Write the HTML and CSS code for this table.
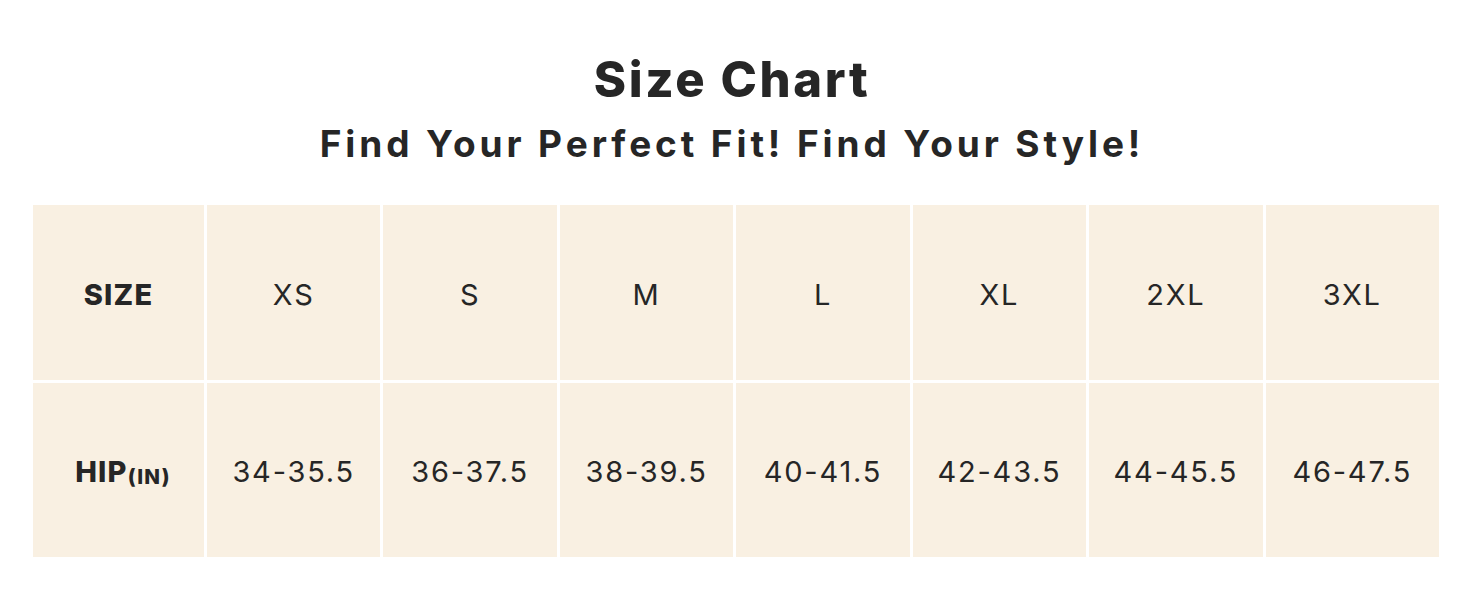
FILE: index.html
```html
<!DOCTYPE html>
<html lang="en">
<head>
<meta charset="utf-8">
<title>Size Chart</title>
<link rel="stylesheet" href="styles.css">
</head>
<body>
<main class="page">
  <header class="head">
    <h1 class="title">Size Chart</h1>
    <p class="subtitle">Find Your Perfect Fit! Find Your Style!</p>
  </header>
  <div class="chart">
    <div class="cell label">SIZE</div>
    <div class="cell">XS</div>
    <div class="cell">S</div>
    <div class="cell">M</div>
    <div class="cell">L</div>
    <div class="cell">XL</div>
    <div class="cell">2XL</div>
    <div class="cell">3XL</div>
    <div class="cell label hip">HIP<span class="unit">(IN)</span></div>
    <div class="cell num">34-35.5</div>
    <div class="cell num">36-37.5</div>
    <div class="cell num">38-39.5</div>
    <div class="cell num">40-41.5</div>
    <div class="cell num">42-43.5</div>
    <div class="cell num">44-45.5</div>
    <div class="cell num">46-47.5</div>
  </div>
</main>
</body>
</html>
```

FILE: styles.css
```css
* { box-sizing: border-box; }
html, body { margin: 0; padding: 0; background: #ffffff; }
body {
  font-family: Inter, "Liberation Sans", sans-serif;
  color: #262626;
  width: 1464px;
  height: 600px;
  overflow: hidden;
}
.page {
  padding-top: 56px;
}
.head {
  display: flex;
  flex-direction: column;
  align-items: center;
}
.title {
  margin: 0;
  font-size: 49px;
  line-height: 48px;
  font-weight: 800;
  letter-spacing: 2.6px;
}
.subtitle {
  margin: 22px 0 0;
  font-size: 37px;
  line-height: 36px;
  font-weight: 700;
  letter-spacing: 3.9px;
}
.chart {
  margin: 43px 0 0 33px;
  width: 1406px;
  display: grid;
  grid-template-columns: 171px repeat(7, 1fr);
  grid-template-rows: 175px 174px;
  column-gap: 3px;
  row-gap: 3px;
}
.cell {
  background: #f9f0e2;
  display: flex;
  align-items: center;
  justify-content: center;
  font-size: 29px;
  font-weight: 400;
  letter-spacing: 1.8px;
  padding-top: 3px;
}
.label {
  font-weight: 800;
  letter-spacing: 1.2px;
}
.hip {
  padding-left: 9px;
}
.unit {
  font-size: 20.5px;
  letter-spacing: 1.2px;
  margin-top: 9px;
}
```
